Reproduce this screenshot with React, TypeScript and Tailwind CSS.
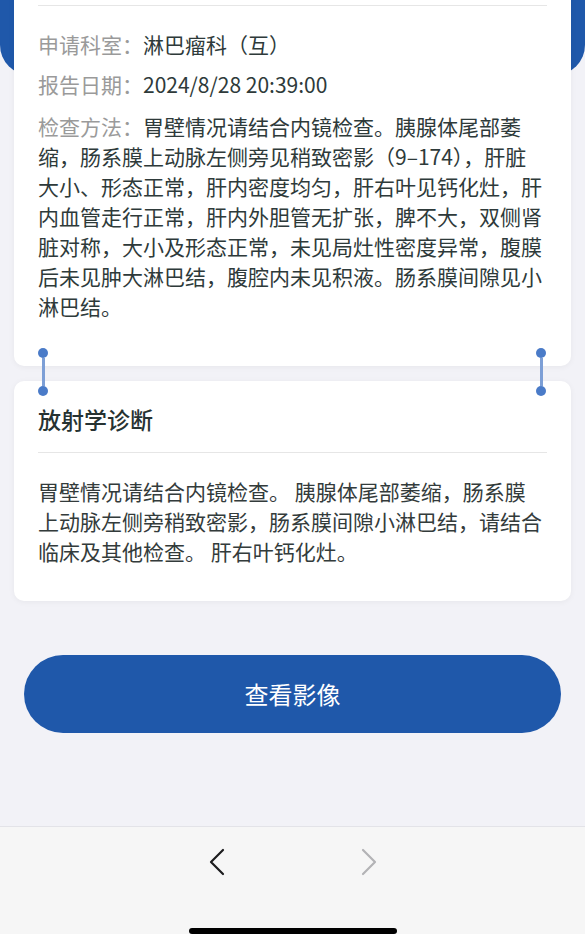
const Connector = ({ side }: { side: "left" | "right" }) => (
  <div
    className={`absolute top-[-18px] flex h-[48px] w-[10px] flex-col items-center ${
      side === "left" ? "left-[38px]" : "left-[536px]"
    }`}
  >
    <div className="h-[10px] w-[10px] shrink-0 rounded-full bg-[#4a7bc8]" />
    <div className="w-[3px] flex-1 bg-[#7d9fd6]" />
    <div className="h-[10px] w-[10px] shrink-0 rounded-full bg-[#4a7bc8]" />
  </div>
)

const App = () => {
  const font = "font-['Noto_Sans_CJK_SC','Noto_Sans',sans-serif]"

  return (
    <div className={`flex h-[934px] w-full flex-col overflow-hidden bg-[#f2f2f7] ${font}`}>
      <div className="flex-1">
        <div className="h-[75px] rounded-b-[30px] bg-[#1f58aa]" />

        {/* report info */}
        <div className="relative mx-[14px] -mt-[95px] rounded-[10px] bg-white px-[24px] pt-[25px] pb-[45px] shadow-[0_1px_6px_rgba(0,0,0,0.05)]">
          <div className="border-t border-[#e6e6e6]" />
          <div className="pr-[3px] text-[21px] leading-[30px] text-[#2e3a3a]">
            <p className="mt-[23px]">
              <span className="text-[#9a9a9a]">申请科室：</span>淋巴瘤科（互）
            </p>
            <p className="mt-[10px]">
              <span className="text-[#9a9a9a]">报告日期：</span>2024/8/28 20:39:00
            </p>
            <p className="mt-[12px]">
              <span className="text-[#9a9a9a]">检查方法：</span>
              胃壁情况请结合内镜检查。胰腺体尾部萎缩，肠系膜上动脉左侧旁见稍致密影（9–174），肝脏大小、形态正常，肝内密度均匀，肝右叶见钙化灶，肝内血管走行正常，肝内外胆管无扩张，脾不大，双侧肾脏对称，大小及形态正常，未见局灶性密度异常，腹膜后未见肿大淋巴结，腹腔内未见积液。肠系膜间隙见小淋巴结。
            </p>
          </div>
        </div>

        <div className="relative h-[15px]">
          <Connector side="left" />
          <Connector side="right" />
        </div>

        {/* diagnosis */}
        <div className="mx-[14px] rounded-[10px] bg-white px-[24px] pt-[23px] pb-[35px] shadow-[0_1px_6px_rgba(0,0,0,0.05)]">
          <h2 className="text-[23px] leading-[30px] font-medium text-[#263232]">放射学诊断</h2>
          <div className="mt-[18px] border-t border-[#e6e6e6]" />
          <p className="mt-[23px] pr-[3px] text-[21px] leading-[30px] text-[#333b3b]">
            胃壁情况请结合内镜检查。 胰腺体尾部萎缩，肠系膜上动脉左侧旁稍致密影，肠系膜间隙小淋巴结，请结合临床及其他检查。 肝右叶钙化灶。
          </p>
        </div>

        <button className="mx-[24px] mt-[54px] flex h-[78px] w-[537px] items-center justify-center rounded-full bg-[#1f58aa] text-[24px] text-white">
          查看影像
        </button>
      </div>

      {/* browser toolbar */}
      <div className="flex h-[108px] shrink-0 flex-col items-center border-t border-[#e3e3e8] bg-[#f6f6f6]">
        <div className="flex h-[72px] items-center gap-[127px]">
          <svg width="24" height="28" viewBox="0 0 24 28" fill="none">
            <polyline points="18,2 6,14 18,26" stroke="#1c1c1e" strokeWidth="2.2" strokeLinecap="round" strokeLinejoin="round" />
          </svg>
          <svg width="24" height="28" viewBox="0 0 24 28" fill="none">
            <polyline points="7,2 19,14 7,26" stroke="#b3b3b6" strokeWidth="2.2" strokeLinecap="round" strokeLinejoin="round" />
          </svg>
        </div>
        <div className="mt-[31px] h-[6px] w-[208px] shrink-0 rounded-full bg-black" />
      </div>
    </div>
  )
}

export default App
